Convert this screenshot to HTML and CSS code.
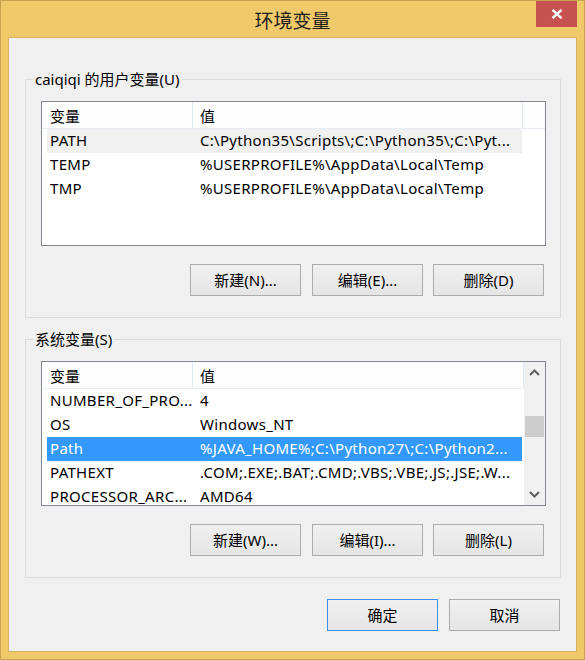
FILE: index.html
```html
<!DOCTYPE html>
<html lang="zh-CN">
<head>
<meta charset="utf-8">
<title>环境变量</title>
<link rel="stylesheet" href="styles.css">
</head>
<body>
<div class="window">
  <div class="titlebar">
    <span class="title">环境变量</span>
    <div class="close">
      <svg width="12" height="10" viewBox="0 0 12 10"><path d="M1.5 0.8 L10.5 9.2 M10.5 0.8 L1.5 9.2" stroke="#fff" stroke-width="2.4" fill="none"/></svg>
    </div>
  </div>
  <div class="client">
    <fieldset class="group">
      <legend>caiqiqi 的用户变量(U)</legend>
      <div class="listbox">
        <div class="lv">
          <div class="lv-header">
            <div class="hcol h1">变量</div>
            <div class="hcol h2">值</div>
            <div class="hfill"></div>
          </div>
          <div class="row hot"><span class="c1">PATH</span><span class="c2">C:\Python35\Scripts\;C:\Python35\;C:\Pyt...</span></div>
          <div class="row"><span class="c1">TEMP</span><span class="c2">%USERPROFILE%\AppData\Local\Temp</span></div>
          <div class="row"><span class="c1">TMP</span><span class="c2">%USERPROFILE%\AppData\Local\Temp</span></div>
        </div>
      </div>
      <div class="btnrow">
        <button class="btn b1">新建(N)...</button>
        <button class="btn b2">编辑(E)...</button>
        <button class="btn b3">删除(D)</button>
      </div>
    </fieldset>

    <fieldset class="group group2">
      <legend>系统变量(S)</legend>
      <div class="listbox">
        <div class="lv">
          <div class="lv-header">
            <div class="hcol h1">变量</div>
            <div class="hcol h2 h2s">值</div>
          </div>
          <div class="row"><span class="c1">NUMBER_OF_PRO...</span><span class="c2">4</span></div>
          <div class="row"><span class="c1">OS</span><span class="c2">Windows_NT</span></div>
          <div class="row sel"><span class="c1">Path</span><span class="c2">%JAVA_HOME%;C:\Python27\;C:\Python2...</span></div>
          <div class="row"><span class="c1">PATHEXT</span><span class="c2">.COM;.EXE;.BAT;.CMD;.VBS;.VBE;.JS;.JSE;.W...</span></div>
          <div class="row"><span class="c1">PROCESSOR_ARC...</span><span class="c2">AMD64</span></div>
        </div>
        <div class="scrollbar">
          <div class="arrow">
            <svg width="11" height="7" viewBox="0 0 11 7"><path d="M1 6 L5.5 1.5 L10 6" stroke="#606060" stroke-width="2" fill="none"/></svg>
          </div>
          <div class="track"><div class="thumb"></div></div>
          <div class="arrow">
            <svg width="11" height="7" viewBox="0 0 11 7"><path d="M1 1 L5.5 5.5 L10 1" stroke="#606060" stroke-width="2" fill="none"/></svg>
          </div>
        </div>
      </div>
      <div class="btnrow">
        <button class="btn b1">新建(W)...</button>
        <button class="btn b2">编辑(I)...</button>
        <button class="btn b3">删除(L)</button>
      </div>
    </fieldset>

    <div class="dlgbtns">
      <button class="btn default">确定</button>
      <button class="btn">取消</button>
    </div>
  </div>
</div>
</body>
</html>
```
FILE: styles.css
```css
html, body {
  margin: 0;
  padding: 0;
  background: #f0c96b;
}

body {
  font-family: "Noto Sans", "Noto Sans CJK SC", sans-serif;
  font-size: 15px;
  color: #000;
}

.window {
  position: relative;
  width: 585px;
  height: 660px;
  box-sizing: border-box;
  border: 1px solid #c9a24e;
  background: #f0c96b;
  padding: 0 7px 7px;
}

.titlebar {
  height: 36px;
  display: flex;
  align-items: center;
  justify-content: center;
}

.title {
  font-family: "Noto Sans CJK SC", sans-serif;
  font-size: 19px;
  line-height: 36px;
  color: #1e1e1e;
  padding-top: 1px;
}

.close {
  position: absolute;
  top: 0;
  right: 7px;
  width: 41px;
  height: 26px;
  background: #c75050;
  display: flex;
  align-items: center;
  justify-content: center;
}

.client {
  height: 615px;
  box-sizing: border-box;
  border: 1px solid #d6b25e;
  background: #f0f0f0;
  padding-top: 31px;
}

.group {
  margin: 0 15px 0 16px;
  padding: 12px 14px 21px 15px;
  border: 1px solid #dcdcdc;
  min-width: 0;
}

.group2 {
  margin-top: 11px;
}

.group legend {
  padding: 0 2px;
  margin-left: -8px;
  line-height: 20px;
  height: 20px;
}

.listbox {
  width: 505px;
  height: 145px;
  box-sizing: border-box;
  border: 1px solid #828790;
  background: #fff;
  display: flex;
  overflow: hidden;
}

.lv {
  flex: 1;
  min-width: 0;
  overflow: hidden;
}

.lv-header {
  display: flex;
  height: 27px;
  box-sizing: border-box;
  border-bottom: 1px solid #e8edf4;
  background: #fdfdfe;
}

.hcol {
  box-sizing: border-box;
  border-right: 1px solid #e1e9f4;
  line-height: 26px;
  padding-top: 1px;
}

.h1 {
  width: 151px;
  padding-left: 8px;
}

.h2 {
  width: 330px;
  padding-left: 7px;
}

.h2s {
  flex: 1;
  width: auto;
}

.hfill {
  flex: 1;
}

.row {
  display: flex;
  width: 475px;
  height: 24px;
  margin-left: 5px;
  line-height: 23px;
  white-space: nowrap;
  letter-spacing: 0.3px;
}

.row .c1 {
  width: 146px;
  box-sizing: border-box;
  padding-left: 3px;
  overflow: hidden;
}

.row .c2 {
  flex: 1;
  padding-left: 7px;
  overflow: hidden;
}

.row.hot {
  background: #f0f0f0;
}

.row.sel {
  background: #3399ff;
  color: #fff;
}

.scrollbar {
  width: 21px;
  background: #f0f0f0;
  display: flex;
  flex-direction: column;
}

.arrow {
  height: 21px;
  display: flex;
  align-items: center;
  justify-content: center;
}

.track {
  flex: 1;
}

.thumb {
  margin: 33px 1px 0 1px;
  height: 21px;
  background: #cdcdcd;
}

.btnrow {
  display: flex;
  margin-top: 18px;
  padding-left: 149px;
}

.btn {
  width: 111px;
  height: 32px;
  box-sizing: border-box;
  border: 1px solid #acacac;
  background: linear-gradient(#f0f0f0, #e5e5e5);
  font-family: "Noto Sans", "Noto Sans CJK SC", sans-serif;
  font-size: 15px;
  color: #000;
  padding: 0;
  margin: 0;
  line-height: 28px;
}

.btnrow .b2 {
  margin-left: 11px;
}

.btnrow .b3 {
  margin-left: 10px;
}

.dlgbtns {
  display: flex;
  justify-content: flex-end;
  gap: 11px;
  margin-top: 21px;
  padding-right: 16px;
}

.btn.default {
  border-color: #3d8fe6;
}
```
